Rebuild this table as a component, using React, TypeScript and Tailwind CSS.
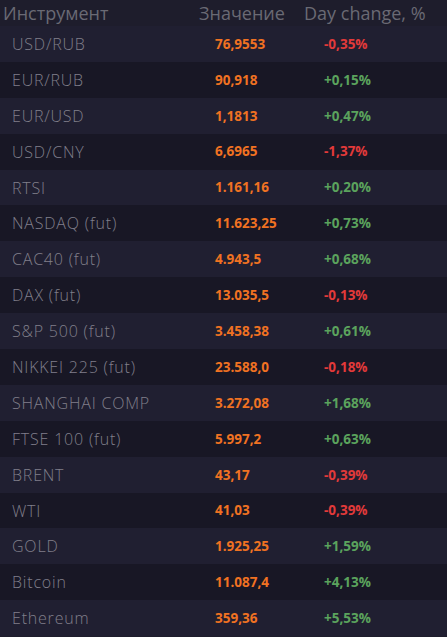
const rows: [string, string, string][] = [
  ['USD/RUB', '76,9553', '-0,35%'],
  ['EUR/RUB', '90,918', '+0,15%'],
  ['EUR/USD', '1,1813', '+0,47%'],
  ['USD/CNY', '6,6965', '-1,37%'],
  ['RTSI', '1.161,16', '+0,20%'],
  ['NASDAQ (fut)', '11.623,25', '+0,73%'],
  ['CAC40 (fut)', '4.943,5', '+0,68%'],
  ['DAX (fut)', '13.035,5', '-0,13%'],
  ['S&P 500 (fut)', '3.458,38', '+0,61%'],
  ['NIKKEI 225 (fut)', '23.588,0', '-0,18%'],
  ['SHANGHAI COMP', '3.272,08', '+1,68%'],
  ['FTSE 100 (fut)', '5.997,2', '+0,63%'],
  ['BRENT', '43,17', '-0,39%'],
  ['WTI', '41,03', '-0,39%'],
  ['GOLD', '1.925,25', '+1,59%'],
  ['Bitcoin', '11.087,4', '+4,13%'],
  ['Ethereum', '359,36', '+5,53%'],
]

const App = () => {
  return (
    <div className="w-[447px] h-[637px] overflow-hidden bg-[#1e1d2c] font-['Open_Sans',sans-serif]">
      <div className="h-[26px] flex items-center text-[18px] text-[#6a6a74] leading-none">
        <span className="w-[199px] pl-[3px]">Инструмент</span>
        <span className="w-[105px]">Значение</span>
        <span>Day change, %</span>
      </div>
      {rows.map(([name, value, change], idx) => (
        <div
          key={name}
          className={`h-[35.9px] grid grid-cols-[215px_109px_1fr] items-center ${
            idx % 2 === 0 ? 'bg-[#201f31]' : 'bg-[#181725]'
          }`}
        >
          <span className="pl-[12px] text-[16px] font-light text-[#807f8b] tracking-[0.8px]">{name}</span>
          <span className="text-[13.5px] font-bold text-[#f07222]">{value}</span>
          <span className={`text-[13.5px] font-bold ${change.startsWith('-') ? 'text-[#e23a3a]' : 'text-[#5ba35d]'}`}>
            {change}
          </span>
        </div>
      ))}
    </div>
  )
}

export default App
